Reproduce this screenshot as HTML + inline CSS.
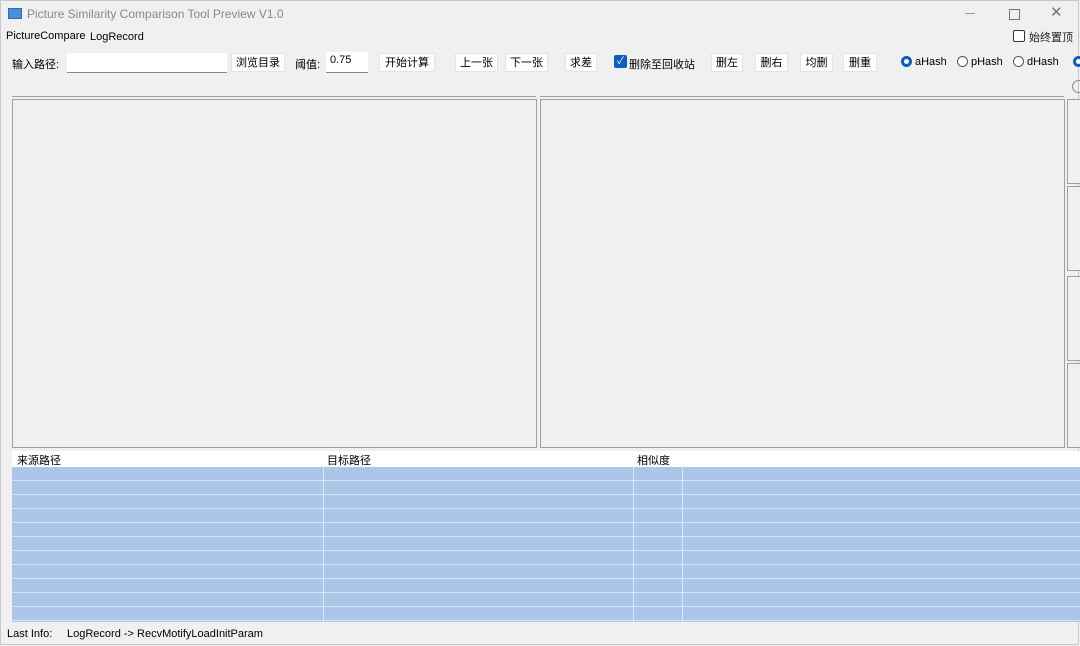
<!DOCTYPE html>
<html><head><meta charset="utf-8"><style>
body{margin:0;width:1080px;height:646px;background:#f0f0f0;font-family:"Liberation Sans","Noto Sans CJK SC",sans-serif;font-size:11px;color:#000;position:relative;overflow:hidden}
.a{position:absolute}
.btn{position:absolute;top:53px;height:19px;background:#fdfdfd;border:1px solid #e3e3e3;box-sizing:border-box;text-align:center;line-height:18px;font-size:11px}
.inp{position:absolute;background:#fff;border-bottom:1px solid #888;box-sizing:border-box}
.panel{position:absolute;border:1px solid #a0a0a0;background:#f0f0f0;box-sizing:border-box}
.rad{position:absolute;top:56px;width:11px;height:11px;border:1px solid #555;border-radius:50%;box-sizing:border-box;background:#fff}
</style></head><body>
<div class="a" style="left:0;top:0;width:1079px;height:645px;border:1px solid #c8c8c8;box-sizing:border-box"></div>
<!-- title -->
<div class="a" style="left:8px;top:8px;width:14px;height:11px;background:#4a90d9;border:1px solid #2c6fb6;box-sizing:border-box"></div>
<div class="a" style="left:27px;top:7px;color:#888;font-size:12px">Picture Similarity Comparison Tool Preview V1.0</div>
<div class="a" style="left:965px;top:13px;width:10px;height:1px;background:#999"></div>
<div class="a" style="left:1009px;top:9px;width:9px;height:9px;border:1px solid #777"></div>
<div class="a" style="left:1050px;top:3px;font-size:15px;color:#777">✕</div>
<!-- menu -->
<div class="a" style="left:6px;top:30px;font-size:11px">PictureCompare</div>
<div class="a" style="left:90px;top:31px;font-size:11px">LogRecord</div>
<div class="a" style="left:1013px;top:30px;width:12px;height:12px;border:1px solid #333;border-radius:2px;box-sizing:border-box;background:#fff"></div>
<div class="a" style="left:1029px;top:29px;font-size:11px;color:#222">始终置顶</div>
<!-- toolbar -->
<div class="a" style="left:12px;top:56px">输入路径:</div>
<div class="inp" style="left:67px;top:53px;width:160px;height:20px"></div>
<div class="btn" style="left:231px;width:54px">浏览目录</div>
<div class="a" style="left:295px;top:56px">阈值:</div>
<div class="inp" style="left:326px;top:52px;width:42px;height:21px"><span style="position:absolute;left:4px;top:2px">0.75</span></div>
<div class="btn" style="left:379px;width:56px">开始计算</div>
<div class="btn" style="left:455px;width:43px">上一张</div>
<div class="btn" style="left:505px;width:43px">下一张</div>
<div class="btn" style="left:565px;width:32px">求差</div>
<div class="a" style="left:614px;top:55px;width:13px;height:13px;background:#0a5fc0;border-radius:2px;color:#fff;font-size:10px;line-height:13px;text-align:center">✓</div>
<div class="a" style="left:629px;top:56px">删除至回收站</div>
<div class="btn" style="left:711px;width:32px">删左</div>
<div class="btn" style="left:755px;width:33px">删右</div>
<div class="btn" style="left:800px;width:33px">均删</div>
<div class="btn" style="left:843px;width:34px">删重</div>
<div class="rad" style="left:901px;border:3px solid #0a5fc0"></div>
<div class="a" style="left:915px;top:56px">aHash</div>
<div class="rad" style="left:957px"></div>
<div class="a" style="left:971px;top:56px">pHash</div>
<div class="rad" style="left:1013px"></div>
<div class="a" style="left:1027px;top:56px">dHash</div>
<div class="rad" style="left:1073px;border:3px solid #0a5fc0"></div>
<div class="a" style="left:1072px;top:80px;width:11px;height:11px;border:1px solid #888;border-radius:50%"></div>
<!-- separators -->
<div class="a" style="left:12px;top:96px;width:524px;height:1px;background:#a0a0a0"></div>
<div class="a" style="left:540px;top:96px;width:524px;height:1px;background:#a0a0a0"></div>
<!-- panels -->
<div class="panel" style="left:12px;top:99px;width:525px;height:349px"></div>
<div class="panel" style="left:540px;top:99px;width:525px;height:349px"></div>
<div class="panel" style="left:1067px;top:99px;width:20px;height:85px"></div>
<div class="panel" style="left:1067px;top:186px;width:20px;height:85px"></div>
<div class="panel" style="left:1067px;top:276px;width:20px;height:85px"></div>
<div class="panel" style="left:1067px;top:363px;width:20px;height:85px"></div>
<!-- table -->
<div class="a" style="left:12px;top:451px;width:1068px;height:16px;background:#fff"></div>
<div class="a" style="left:17px;top:452px">来源路径</div>
<div class="a" style="left:327px;top:452px">目标路径</div>
<div class="a" style="left:637px;top:452px">相似度</div>
<div class="a" style="left:12px;top:467px;width:1068px;height:155px;background:repeating-linear-gradient(#abc6e8 0,#abc6e8 13px,#d6e4f5 13px,#d6e4f5 14px)"></div>
<div class="a" style="left:323px;top:467px;width:1px;height:155px;background:#dde8f6"></div>
<div class="a" style="left:633px;top:467px;width:1px;height:155px;background:#dde8f6"></div>
<div class="a" style="left:682px;top:467px;width:1px;height:155px;background:#dde8f6"></div>
<!-- status -->
<div class="a" style="left:7px;top:628px">Last Info:</div>
<div class="a" style="left:67px;top:628px">LogRecord -&gt; RecvMotifyLoadInitParam</div>
</body></html>
